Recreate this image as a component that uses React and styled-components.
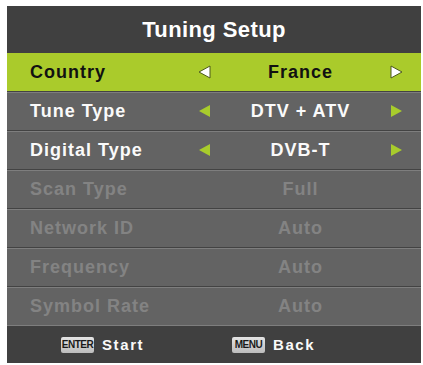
import styled, { createGlobalStyle } from "styled-components";

const GlobalStyle = createGlobalStyle`
  body {
    margin: 0;
    background: #ffffff;
    font-family: "Liberation Sans", Arial, sans-serif;
  }
`;

const COLORS = {
  header: "#404040",
  body: "#636363",
  green: "#aacb2b",
  arrow: "#a8cc2c",
  dim: "#838383",
  lineDark: "#434343",
  lineLight: "#7e7e7e",
};

const Panel = styled.div`
  margin: 6px 0 0 7px;
  width: 414px;
  background: ${COLORS.body};
  display: flex;
  flex-direction: column;
`;

const Header = styled.div`
  height: 47px;
  background: ${COLORS.header};
  color: #fff;
  display: flex;
  align-items: center;
  justify-content: center;
  font-size: 22px;
  font-weight: bold;
  letter-spacing: 0.4px;
`;

const Row = styled.div`
  box-sizing: border-box;
  height: ${(p) => (p.$first ? 38 : 39)}px;
  display: grid;
  grid-template-columns: 168px 13px 179px 13px;
  align-items: center;
  padding: 0 18px 0 23px;
  font-size: 18px;
  font-weight: bold;
  letter-spacing: 1px;
  background: ${(p) => (p.$active ? COLORS.green : COLORS.body)};
  color: ${(p) => (p.$active ? "#111" : p.$dim ? COLORS.dim : "#fafafa")};
  border-top: ${(p) => (p.$first ? "none" : `1px solid ${COLORS.lineDark}`)};
  box-shadow: ${(p) =>
    p.$first ? "none" : `inset 0 1px 0 ${COLORS.lineLight}`};
`;

const Cell = styled.span`
  display: flex;
  align-items: center;
`;

const Value = styled.span`
  text-align: center;
`;

const Footer = styled.div`
  height: 38px;
  background: ${COLORS.header};
  border-top: 1px solid ${COLORS.lineLight};
  box-sizing: border-box;
  display: grid;
  grid-template-columns: 171px 1fr;
  align-items: center;
  padding-left: 54px;
  color: #fafafa;
  font-size: 15px;
  font-weight: bold;
  letter-spacing: 1.6px;
`;

const Hint = styled.div`
  display: flex;
  align-items: center;
  gap: 8px;
`;

const Key = styled.span`
  display: inline-flex;
  align-items: center;
  justify-content: center;
  box-sizing: border-box;
  height: 16px;
  width: 33px;
  border-radius: 2px;
  background: linear-gradient(#e4e4e4, #bcbcbc);
  color: #1a1a1a;
  font-family: "Liberation Sans Narrow", "Liberation Sans", sans-serif;
  font-size: 10px;
  font-weight: bold;
  letter-spacing: -0.5px;
`;

const Arrow = ({ dir, active }) => (
  <svg width="13" height="14" viewBox="0 0 13 14">
    <polygon
      points={dir === "left" ? "12,1 12,13 1,7" : "1,1 1,13 12,7"}
      fill={active ? "#ffffff" : COLORS.arrow}
      stroke={active ? "#4d5a1a" : "none"}
      strokeWidth="1"
    />
  </svg>
);

const rows = [
  { label: "Country", value: "France", arrows: true, active: true },
  { label: "Tune Type", value: "DTV + ATV", arrows: true },
  { label: "Digital Type", value: "DVB-T", arrows: true },
  { label: "Scan Type", value: "Full", dim: true },
  { label: "Network ID", value: "Auto", dim: true },
  { label: "Frequency", value: "Auto", dim: true },
  { label: "Symbol Rate", value: "Auto", dim: true },
];

export default function App() {
  return (
    <>
      <GlobalStyle />
      <Panel>
        <Header>Tuning Setup</Header>
        {rows.map((r, i) => (
          <Row key={r.label} $first={i === 0} $active={r.active} $dim={r.dim}>
            <span>{r.label}</span>
            <Cell>{r.arrows && <Arrow dir="left" active={r.active} />}</Cell>
            <Value>{r.value}</Value>
            <Cell>{r.arrows && <Arrow dir="right" active={r.active} />}</Cell>
          </Row>
        ))}
        <Footer>
          <Hint>
            <Key>ENTER</Key>
            Start
          </Hint>
          <Hint>
            <Key>MENU</Key>
            Back
          </Hint>
        </Footer>
      </Panel>
    </>
  );
}
